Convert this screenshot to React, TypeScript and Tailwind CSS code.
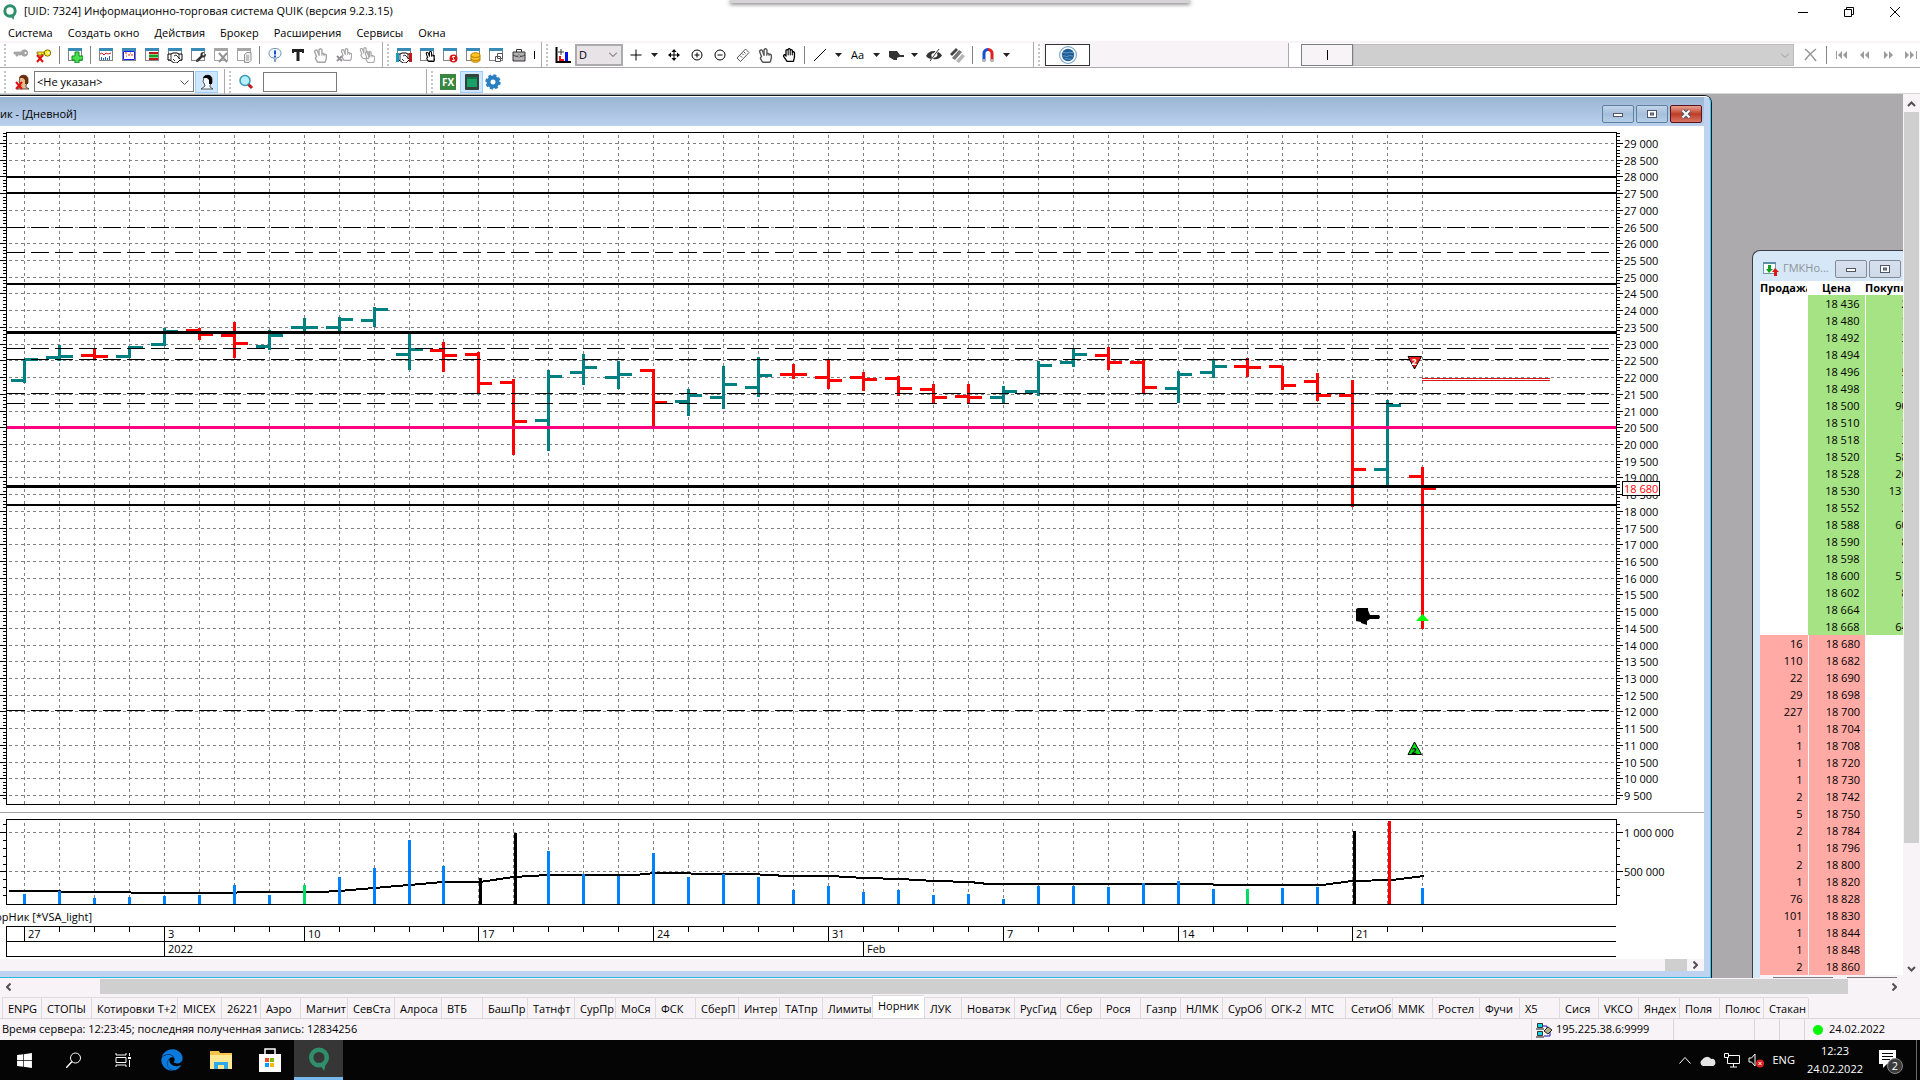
import React from 'react';
import { FaEdge, FaWindows, FaRegHandPaper, FaRegHandPeace, FaWrench } from 'react-icons/fa';

const TEAL = '#008080';
const RED = '#ff0000';

// [color, high, low, open, close], in chart pixels
const BARS: [string, number, number, number, number][] = [
  [TEAL, 359, 383, 380, 359],
  [TEAL, 345, 361, 357, 356],
  [RED, 348, 359, 355, 356],
  [TEAL, 346, 358, 356, 347],
  [TEAL, 328, 346, 344, 331],
  [RED, 328, 340, 330, 334],
  [RED, 322, 358, 335, 343],
  [TEAL, 330, 350, 346, 335],
  [TEAL, 318, 332, 327, 327],
  [TEAL, 317, 332, 327, 319],
  [TEAL, 307, 327, 320, 309],
  [TEAL, 333, 370, 354, 349],
  [RED, 342, 372, 350, 355],
  [RED, 352, 393, 354, 383],
  [RED, 379, 455, 382, 421],
  [TEAL, 370, 451, 420, 376],
  [TEAL, 354, 385, 372, 367],
  [TEAL, 361, 389, 377, 374],
  [RED, 369, 427, 370, 402],
  [TEAL, 389, 416, 401, 395],
  [TEAL, 366, 409, 397, 384],
  [TEAL, 357, 397, 387, 375],
  [RED, 364, 379, 374, 374],
  [RED, 359, 389, 377, 380],
  [RED, 372, 391, 377, 379],
  [RED, 376, 396, 378, 388],
  [RED, 384, 404, 389, 397],
  [RED, 384, 404, 396, 397],
  [TEAL, 386, 403, 397, 391],
  [TEAL, 361, 396, 391, 365],
  [TEAL, 348, 367, 362, 354],
  [RED, 347, 370, 355, 362],
  [RED, 359, 394, 362, 387],
  [TEAL, 371, 403, 388, 374],
  [TEAL, 359, 378, 372, 366],
  [RED, 358, 377, 366, 367],
  [RED, 366, 390, 366, 385],
  [RED, 373, 401, 381, 395],
  [RED, 380, 507, 395, 469],
  [TEAL, 400, 485, 469, 405],
  [RED, 467, 629, 476, 488],
];

const VOLUMES = [
  894, 891, 898, 897, 896, 895, 885, 895, 885, 877, 868, 840, 866, 878, 833, 851, 874, 876, 853, 877, 874,
  877, 890, 886, 892, 890, 895, 894, 899, 886, 886, 887, 883, 881, 889, 889, 888, 887, 831, 821, 888,
];

const VOLUME_COLORS: Record<number, string> = {
  8: '#00dc64', 35: '#00dc64', 13: '#000000', 14: '#000000', 38: '#000000', 39: RED,
};

const DAYS: Record<number, string> = { 0: '27', 4: '3', 8: '10', 13: '17', 18: '24', 23: '31', 28: '7', 33: '14', 38: '21' };
const MONTHS: Record<number, string> = { 4: '2022', 24: 'Feb' };

// [y, thickness, color]
const LEVELS: [number, number, string][] = [
  [176, 2, '#000'], [192, 2, '#000'], [283, 2, '#000'], [331, 3, '#000'],
  [426, 3, '#ff0080'], [485, 3, '#000'], [504, 2, '#000'],
];
const DASHED_LEVELS = [227, 252, 348, 359, 393, 403, 710];

const barX = (i: number) => 24 + 35 * i - (i >= 12 ? 1 : 0) - (i >= 35 ? 1 : 0);
const priceY = (price: number) => Math.round(143 + (29000 - price) * 0.03344);
const formatPrice = (n: number) => String(n).replace(/\B(?=(\d{3})+$)/g, ' ');

const MAJOR_PRICES = Array.from({ length: 40 }, (_, i) => 29000 - i * 500);
const MINOR_PRICES = Array.from({ length: 200 }, (_, i) => 29300 - i * 100).filter(p => p >= 9300);

const BIDS: [number, number][] = [
  [18436, 20], [18480, 10], [18492, 30], [18494, 10], [18496, 50], [18498, 30], [18500, 900], [18510, 10],
  [18518, 30], [18520, 580], [18528, 260], [18530, 1310], [18552, 20], [18588, 600], [18590, 80], [18598, 20],
  [18600, 510], [18602, 80], [18664, 10], [18668, 640],
];
const ASKS: [number, number][] = [
  [16, 18680], [110, 18682], [22, 18690], [29, 18698], [227, 18700], [1, 18704], [1, 18708], [1, 18720],
  [1, 18730], [2, 18742], [5, 18750], [2, 18784], [1, 18796], [2, 18800], [1, 18820], [76, 18828],
  [101, 18830], [1, 18844], [1, 18848], [2, 18860],
];

const TABS: [string, string][] = [
  ['ENPG', 'w-[39px]'], ['СТОПЫ', 'w-[50px]'], ['Котировки Т+2', 'w-[86px]'], ['MICEX', 'w-[44px]'],
  ['26221', 'w-[39px]'], ['Аэро', 'w-[40px]'], ['Магнит', 'w-[47px]'], ['СевСта', 'w-[47px]'],
  ['Алроса', 'w-[47px]'], ['ВТБ', 'w-[41px]'], ['БашПр', 'w-[45px]'], ['Татнфт', 'w-[47px]'],
  ['СурПр', 'w-[41px]'], ['МоСя', 'w-[40px]'], ['ФСК', 'w-[40px]'], ['СберП', 'w-[43px]'],
  ['Интер', 'w-[41px]'], ['ТАТпр', 'w-[43px]'], ['Лимиты', 'w-[50px]'], ['Норник', 'w-[52px]'],
  ['ЛУК', 'w-[37px]'], ['Новатэк', 'w-[53px]'], ['РусГид', 'w-[46px]'], ['Сбер', 'w-[40px]'],
  ['Рося', 'w-[40px]'], ['Газпр', 'w-[40px]'], ['НЛМК', 'w-[42px]'], ['СурОб', 'w-[43px]'],
  ['ОГК-2', 'w-[40px]'], ['МТС', 'w-[40px]'], ['СетиОб', 'w-[47px]'], ['ММК', 'w-[40px]'],
  ['Ростел', 'w-[47px]'], ['Фучи', 'w-[40px]'], ['X5', 'w-[40px]'], ['Сися', 'w-[39px]'],
  ['VKCO', 'w-[40px]'], ['Яндех', 'w-[41px]'], ['Поля', 'w-[40px]'], ['Полюс', 'w-[44px]'], ['Стакан', 'w-[45px]'],
];

const Svg: React.FC<{ size?: number; children: React.ReactNode }> = ({ size = 16, children }) => (
  <svg width={size} height={size} viewBox="0 0 16 16" fill="none" className="block shrink-0">{children}</svg>
);

// small window frame shared by most of the toolbar icons
const Frame: React.FC<{ gray?: boolean; children?: React.ReactNode }> = ({ gray, children }) => (
  <Svg>
    <rect x="1.5" y="1.5" width="13" height="12" fill="#fff" stroke={gray ? '#a5a5a5' : '#848484'} />
    <rect x="1" y="1" width="14" height="3" fill={gray ? '#a5a5a5' : '#398ab5'} />
    {children}
  </Svg>
);

const Quik: React.FC<{ size?: number }> = ({ size = 16 }) => (
  <Svg size={size}>
    <circle cx="8" cy="7" r="5.2" stroke="#2f8f6b" strokeWidth="3" />
    <path d="M7.5 10.5 12.5 11 11.5 16z" fill="#2f8f6b" />
  </Svg>
);

const ToolButton: React.FC<{ title: string; children: React.ReactNode }> = ({ title, children }) => (
  <button title={title} className="w-[23px] h-[22px] shrink-0 flex items-center justify-center">{children}</button>
);

const Caret = () => (
  <button title="Ещё" className="w-[15px] h-[22px] shrink-0 flex items-center justify-center">
    <svg width="7" height="4" viewBox="0 0 7 4"><path d="M0 0h7L3.5 4z" fill="#222" /></svg>
  </button>
);

const Sep = () => (
  <div className="w-2 shrink-0 flex justify-center"><div className="w-px h-[18px] bg-[#848484]" /></div>
);

const Grip = () => (
  <div className="w-[9px] shrink-0 flex justify-center"><div className="h-[22px] border-l-2 border-dotted border-[#c6c3c6]" /></div>
);

const Edge = () => <div className="w-px h-[26px] shrink-0 bg-[#adaaad]" />;

const Key: React.FC<{ color: string; line: string; cross?: boolean }> = ({ color, line, cross }) => (
  <Svg>
    <path d="M1 5h7v3H6V7H5v2H3V7H1z" fill={color} stroke={line} strokeWidth=".8" />
    <circle cx="11.5" cy="6" r="3.2" fill={color} stroke={line} />
    <circle cx="12.5" cy="6" r="1" fill="#fff" />
    {cross && <path d="m1 8 6 7M7 8l-6 7" stroke="#e01010" strokeWidth="2" />}
  </Svg>
);

// clasped hands with white palms, drawn over a frame
const Handshake = () => (
  <g>
    <path d="M1 7h3l2-1h4l2 1h3v6h-2l-3 3H7l-4-3H1z" fill="#fff" stroke="#000" />
    <path d="M4 7v6M12 7v5M7 9l2-1 4 4M6 12l2 2" stroke="#000" strokeWidth=".8" />
  </g>
);

const Rewind: React.FC<{ title: string; d: string }> = ({ title, d }) => (
  <ToolButton title={title}><svg width="12" height="8" viewBox="0 0 12 8"><path d={d} fill="#9c9a9c" /></svg></ToolButton>
);

const Toolbar = () => (
  <div className="flex items-center h-[27px] border-t-2 border-[#f7f3f7] border-b border-b-[#adaaad]">
    <Grip />
    <ToolButton title="Подключиться"><Key color="#a5a5a5" line="#a5a5a5" /></ToolButton>
    <ToolButton title="Отключиться"><Key color="#ffef31" line="#7b6d00" cross /></ToolButton>
    <Sep />
    <ToolButton title="Новое окно">
      <Frame><path d="M8 5h4v4h4v4h-4v3H8v-3H5V9h3z" fill="#4be04b" stroke="#0b8a1a" /></Frame>
    </ToolButton>
    <Sep />
    <ToolButton title="График">
      <Frame><path d="m2 7 2-1 2 2 2-2 2 1 3-1" stroke="#d62020" /><path d="M3.500 13v-3M5.500 13v-2M7.500 13v-3M9.500 13v-2M11.500 13V9" stroke="#2060c0" /></Frame>
    </ToolButton>
    <ToolButton title="Диаграмма">
      <Frame><path d="M2.500 4.500h11v8h-11z" stroke="#1020ff" /><path d="M4 6h2M7 8h2M9 6h1M5 9h1M11 7v2" stroke="#f02020" /></Frame>
    </ToolButton>
    <ToolButton title="Котировки">
      <Frame><path d="M5 6h9M5 12h9" stroke="#c01818" strokeWidth="2" /><path d="M5 9h9" stroke="#10a020" strokeWidth="3" /></Frame>
    </ToolButton>
    <ToolButton title="Сделки"><Frame><Handshake /></Frame></ToolButton>
    <ToolButton title="Настройка"><Frame><g transform="translate(6 5)" color="#333"><FaWrench size={10} /></g></Frame></ToolButton>
    <ToolButton title="Удалить"><Frame gray><path d="m6 6 8 9M14 6l-8 9" stroke="#949294" strokeWidth="2" /></Frame></ToolButton>
    <ToolButton title="Копировать">
      <Frame gray><path d="M8.500 7.500 11 5.500h4v8l-2 2H8.500z" fill="#eee" stroke="#949294" /><path d="M10 9h3M10 11h3M10 13h3" stroke="#949294" /></Frame>
    </ToolButton>
    <Sep />
    <ToolButton title="Сообщения">
      <Svg><path d="M8 1.500c4 0 6 2 6 4.800 0 3-2.500 4.700-4.700 4.700L8 15l-1-4C4 11 2 9 2 6.300 2 3.500 4 1.500 8 1.500z" fill="#eef7ff" stroke="#6f8ea8" /><path d="M8 3.500v4M8 8.500v2" stroke="#1450c8" strokeWidth="2" /></Svg>
    </ToolButton>
    <ToolButton title="Текст"><Svg><path d="M2 2h12v4h-2V5H9.500v9h-3V5H4v1H2z" fill="#222" /></Svg></ToolButton>
    <ToolButton title="Заявка"><FaRegHandPeace size={15} color="#a5a5a5" /></ToolButton>
    <ToolButton title="Снять заявку">
      <Svg><g transform="translate(4 1)" color="#a5a5a5"><FaRegHandPeace size={13} /></g><path d="m1 9 5 5M6 9l-5 5" stroke="#949294" strokeWidth="2" /></Svg>
    </ToolButton>
    <ToolButton title="Снять все">
      <Svg><g color="#a5a5a5"><FaRegHandPeace size={12} /></g><g transform="translate(5 4)" color="#a5a5a5"><FaRegHandPeace size={12} /></g></Svg>
    </ToolButton>
    <div className="w-[5px] shrink-0 flex justify-end"><Edge /></div>
    <Grip />
    <ToolButton title="Таблица сделок">
      <Frame><Handshake /><path d="M0 6h3v9H0z" fill="#1a9ac0" /><path d="M13 6h3v9h-3z" fill="#c01818" /></Frame>
    </ToolButton>
    <ToolButton title="Таблица заявок"><Frame><g transform="translate(6 4)" color="#000"><FaRegHandPeace size={11} /></g></Frame></ToolButton>
    <ToolButton title="Стоп-заявки">
      <Frame><circle cx="11.500" cy="11.500" r="4" fill="#d81818" /><path d="M13 9.500h-2.500l2 4H10" stroke="#fff" /></Frame>
    </ToolButton>
    <ToolButton title="Деньги">
      <Frame><path d="M6 8c0-3 9-3 9 0v5c0 3-9 3-9 0z" fill="#ffc520" stroke="#b57b00" /><path d="M6 9c2 2 7 2 9 0M6 12c2 2 7 2 9 0" stroke="#b57b00" /></Frame>
    </ToolButton>
    <ToolButton title="Бумаги">
      <Frame><path d="M9.500 6.500h5v5h-5zM7.500 9.500h5v5h-5z" fill="#fff" stroke="#555" /></Frame>
    </ToolButton>
    <ToolButton title="Портфель">
      <Svg><path d="M2 5h12v9H2z" fill="#b5b2b5" stroke="#333" /><path d="M5.500 5V2.500h5V5M2 8c3 2 9 2 12 0" stroke="#333" /><path d="M7 8h2v2H7z" fill="#fff" stroke="#333" strokeWidth=".5" /></Svg>
    </ToolButton>
    <div className="w-3 h-[22px] shrink-0 flex justify-between items-center pl-1"><div className="w-px h-2 bg-black" /><Edge /></div>
    <Grip />
    <ToolButton title="Тип графика">
      <Svg><path d="M1.500 0v15H16" stroke="#000" strokeWidth="2" /><path d="M4 9h2v5H4zM6 12h3v2H6z" fill="#f01010" /><path d="M10 5h3v9h-3z" fill="#0010f0" /><path d="M3 5h6M6 2v6" stroke="#333" /></Svg>
    </ToolButton>
    <div className="relative w-12 h-[22px] ml-px shrink-0 border-2 border-[#adaaad] bg-[#e7e3e7]">
      <select aria-label="Интервал" className="appearance-none w-full h-full pl-0.5 leading-4 outline-none"><option>D</option></select>
      <svg width="8" height="5" viewBox="0 0 8 5" fill="none" className="absolute right-1 top-1.5"><path d="m0 .5 4 4 4-4" stroke="#555" /></svg>
    </div>
    <div className="w-px shrink-0" />
    <ToolButton title="Курсор"><Svg><path d="M8 2.500v11M2.500 8h11" stroke="#000" /></Svg></ToolButton>
    <Caret />
    <ToolButton title="Переместить">
      <Svg><path d="M8 3v10M3 8h10" stroke="#000" /><path d="m8 2-2.500 3h5zM8 14l-2.500-3h5zM2 8l3-2.500v5zM14 8l-3-2.500v5z" fill="#000" /></Svg>
    </ToolButton>
    <ToolButton title="Увеличить"><Svg><circle cx="8" cy="8" r="5" stroke="#000" /><path d="M8 5.500v5M5.500 8h5" stroke="#000" /></Svg></ToolButton>
    <ToolButton title="Уменьшить"><Svg><circle cx="8" cy="8" r="5" stroke="#000" /><path d="M5.500 8h5" stroke="#000" /></Svg></ToolButton>
    <ToolButton title="Линейка">
      <Svg><path d="m2 11 8.500-9L14 5.500 5.500 14.500z" fill="#fff" stroke="#555" /><path d="m5 8.500 2 2M7 6.500l1.500 1.500M8.500 4.500l2 2" stroke="#555" /></Svg>
    </ToolButton>
    <ToolButton title="Выбор"><FaRegHandPeace size={15} color="#555" /></ToolButton>
    <ToolButton title="Рука"><FaRegHandPaper size={14} color="#000" /></ToolButton>
    <Sep />
    <ToolButton title="Линия"><Svg><path d="M2 14 14 2" stroke="#000" /></Svg></ToolButton>
    <Caret />
    <ToolButton title="Надпись"><span>Aa</span></ToolButton>
    <Caret />
    <ToolButton title="Метка"><Svg><path d="M1 4h8l3 4h4v2h-5l-2 1v2H6l-5-3z" fill="#333" /></Svg></ToolButton>
    <Caret />
    <ToolButton title="Скрыть">
      <Svg>
        <path d="M0 9c2-4 5-5.500 9.500-5L8 6C5 6 5 9 6 10l-1 2C3 11.500 1 10.500 0 9zM12 5c2 1 3 2 4 3.500-2 3-5 4.500-9 3.500l1-1.500c3 0 4-2 3-4z" fill="#333" />
        <path d="M13 2 4 14" stroke="#333" />
      </Svg>
    </ToolButton>
    <ToolButton title="Слои">
      <Svg><path d="m1 7 6-6 2 2-6 6z" fill="#444" /><path d="m3 11 7-8 3 2-7 8z" fill="#777" /><path d="m7 14 6-7 3 2-6 7z" fill="#b5b5b5" /></Svg>
    </ToolButton>
    <Sep />
    <ToolButton title="Магнит">
      <Svg><path d="M4 14V7a4 4 0 0 1 4-4.500" stroke="#1a4fd0" strokeWidth="3" /><path d="M12 14V7a4 4 0 0 0-4-4.500" stroke="#e02020" strokeWidth="3" /><path d="M2.500 12h3v3h-3zM10.500 12h3v3h-3z" fill="#b5b5b5" /></Svg>
    </ToolButton>
    <Caret />
    <div className="w-5 shrink-0 flex justify-end"><Edge /></div>
    <Grip />
    <div className="flex items-center w-[246px] h-full shrink-0 pl-0.5 bg-[#f7f3f7] border-r border-[#adaaad]">
      <button title="Сеть" className="w-[45px] h-[22px] flex items-center justify-center bg-white border border-[#333]">
        <Svg size={18}><circle cx="8" cy="8" r="7.500" stroke="#7aa5c8" /><circle cx="8" cy="8" r="5.500" fill="#1d5f96" /><path d="M3 6c2-1 3 1 5 0s3 0 5 0M3 9c2-1 3 1 5 0s3 0 5 0M5 11.500c2-1 4 1 6 0" stroke="#9cc5e5" strokeWidth=".5" /></Svg>
      </button>
    </div>
    <div className="w-3 shrink-0" />
    <button title="Инструмент" className="w-[52px] h-[22px] shrink-0 border border-[#7b7d84] bg-[#f7f3f7] flex items-center justify-center"><span className="w-px h-2.5 bg-black" /></button>
    <div className="relative flex-1 h-[22px] bg-[#cecfce] border border-[#bdbebd]">
      <select aria-label="Поиск" disabled className="appearance-none w-full h-full"><option></option></select>
      <svg width="8" height="5" viewBox="0 0 8 5" fill="none" className="absolute right-1 top-2"><path d="m0 .5 4 4 4-4" stroke="#9c9a9c" /></svg>
    </div>
    <div className="flex items-center shrink-0 overflow-hidden w-[126px]">
      <div className="w-px h-[18px] ml-px bg-[#848484]" />
      <div className="w-1 shrink-0" />
      <ToolButton title="Очистить"><Svg><path d="M2 2c4 3 8 8 11 12M13 2C9 5 5 9 2 13" stroke="#949294" strokeWidth="1.500" /></Svg></ToolButton>
      <Sep />
      <Rewind title="В начало" d="M0 0h1v8H0zM6 0v8L2 4zM11 0v8L7 4z" />
      <Rewind title="Назад" d="M5 0v8L1 4zM10 0v8L6 4z" />
      <Rewind title="Вперёд" d="M2 0v8l4-4zM7 0v8l4-4z" />
      <Rewind title="В конец" d="M0 0v8l4-4zM5 0v8l4-4zM11 0h1v8h-1z" />
    </div>
  </div>
);

const Person: React.FC<{ cross?: boolean }> = ({ cross }) => (
  <Svg>
    <path d="M5 3c2-3 8-2 8 2v4l-2 2v2l3 2H2l4-3-1-3-1-1z" fill={cross ? '#e8b98a' : '#f5fbff'} stroke="#333" strokeWidth=".8" />
    <path d="M4 4c1-4 9-4 9 1v5h-3V6L8 4z" fill={cross ? '#6b3010' : '#000'} />
    {cross && <path d="m1 8 6 7M7 8l-6 7" stroke="#e01010" strokeWidth="2" />}
  </Svg>
);

const SubToolbar = () => (
  <div className="flex items-center h-[26px] pt-0.5 border-b border-[#d6d7d6]">
    <Grip />
    <div className="w-[25px] pl-1.5 shrink-0"><Person cross /></div>
    <div className="relative w-40 h-[21px] border border-[#7b797b]">
      <select aria-label="Клиент" className="appearance-none w-full h-full pl-0.5 leading-4 outline-none"><option>&lt;Не указан&gt;</option></select>
      <svg width="9" height="5" viewBox="0 0 9 5" fill="none" className="absolute right-1 top-2"><path d="m.5.500 4 4 4-4" stroke="#555" /></svg>
    </div>
    <button title="Клиент" className="ml-px w-[23px] h-[22px] bg-[#cee7ff] border border-[#9ccfff] flex items-center justify-center"><Person /></button>
    <div className="w-[7px] flex justify-end"><Edge /></div>
    <Grip />
    <div className="w-[29px] pl-1">
      <Svg><path d="m9 9 5 5" stroke="#c01818" strokeWidth="3" /><circle cx="7" cy="6.500" r="5" fill="#b5f0ff" stroke="#3b97b5" strokeWidth="1.500" /></Svg>
    </div>
    <input aria-label="Найти" className="w-[74px] h-5 border border-[#7b797b] outline-none" />
    <div className="w-[90px] flex justify-end"><Edge /></div>
    <Grip />
    <div className="w-1" />
    <button title="FX" className="w-4 h-4 bg-[#39863f] text-white font-bold text-[10px] leading-4">FX</button>
    <button title="Терминал" className="ml-1 w-[23px] h-[22px] bg-[#cee7ff] border border-[#9ccfff] flex items-center justify-center">
      <Svg><rect x="1" width="14" height="16" rx="1" fill="#34423c" /><rect x="3" y="3" width="10" height="10" fill="#17a067" /><path d="M3 3h10v2H3z" fill="#0c7548" /></Svg>
    </button>
    <button title="Настройки" className="ml-0.5">
      <Svg><circle cx="8" cy="8" r="4.500" stroke="#2a7fc0" strokeWidth="4" /><circle cx="8" cy="8" r="6.700" stroke="#2a7fc0" strokeWidth="2" strokeDasharray="3 2.300" /></Svg>
    </button>
  </div>
);

const WindowButtons: React.FC<{ active?: boolean }> = ({ active }) => {
  const base = active
    ? 'border-[#5f7f9f] bg-linear-to-b from-[#c2d5ea] via-[#a5bedb] to-[#b5cfe8]'
    : 'border-[#848a94] bg-linear-to-b from-[#d6e0ee] to-[#ced9e8]';
  return (
    <div className="flex gap-0.5 shrink-0">
      <button title="Свернуть" className={`w-8 h-[18px] rounded-xs border flex items-center justify-center ${base}`}>
        <Svg><rect x="3.500" y="7.500" width="9" height="3" fill="#fff" stroke="#525563" /></Svg>
      </button>
      <button title="Развернуть" className={`w-8 h-[18px] rounded-xs border flex items-center justify-center ${base}`}>
        <Svg><rect x="3.500" y="4.500" width="9" height="7" fill="#fff" stroke="#525563" /><rect x="6.500" y="7" width="3" height="2" fill="#7a9cc5" stroke="#525563" /></Svg>
      </button>
      {active && (
        <button title="Закрыть" className="w-8 h-[18px] rounded-xs border border-[#5a1018] bg-linear-to-b from-[#e8a093] via-[#bd3c24] to-[#d67563] flex items-center justify-center">
          <Svg><path d="m4.500 4.500 7 7M11.500 4.500l-7 7" stroke="#525563" strokeWidth="4" /><path d="m4.500 4.500 7 7M11.500 4.500l-7 7" stroke="#fff" strokeWidth="2" /></Svg>
        </button>
      )}
    </div>
  );
};

const Chart = () => (
  <svg viewBox="0 126 1704 833" className="block w-full bg-white" fontSize="11">
    <g shapeRendering="crispEdges">
      {/* price grid */}
      <g stroke="#808080" strokeDasharray="3 3">
        {MAJOR_PRICES.map(p => <line key={p} x1="9" x2="1614" y1={priceY(p) + 0.5} y2={priceY(p) + 0.5} />)}
        {BARS.map((_, i) => <line key={i} x1={barX(i) + 0.5} x2={barX(i) + 0.5} y1="135" y2="804" />)}
        {BARS.map((_, i) => <line key={i} x1={barX(i) + 0.5} x2={barX(i) + 0.5} y1="823" y2="904" />)}
        <path d="M9 832.500H1614M9 871.500H1614" />
      </g>

      {BARS.map(([color, high, low, open, close], i) => (
        <g key={i} fill={color}>
          <rect x={barX(i) - 1} y={high} width="3" height={low - high} />
          <rect x={barX(i) - 13} y={open - 1} width="13" height="3" />
          <rect x={barX(i)} y={close - 1} width="14" height="3" />
        </g>
      ))}

      {LEVELS.map(([y, h, color]) => <rect key={y} x="7" y={y} width="1609" height={h} fill={color} />)}
      {DASHED_LEVELS.map(y => <line key={y} x1="7" x2="1610" y1={y + 0.5} y2={y + 0.5} stroke="#000" strokeDasharray="18 6" />)}
      <path d="M1422 378.500h128M1422 380.500h128" stroke="#d61818" />

      {/* frames and axis ticks */}
      <path d="M6.500 132.500H1616.500V804.500H6.500zM6.500 819.500H1616.500V904.500H6.500z" stroke="#000" fill="none" />
      {MINOR_PRICES.map(p => <path key={p} d={`M3 ${priceY(p) + 0.5}h3M1617 ${priceY(p) + 0.5}h3`} stroke="#000" />)}
      {MAJOR_PRICES.map(p => <path key={p} d={`M0 ${priceY(p) + 0.5}h6M1617 ${priceY(p) + 0.5}h6`} stroke="#000" />)}
      {[824, 840, 848, 856, 864, 879, 887, 895].map(y => <path key={y} d={`M3 ${y + 0.5}h3M1617 ${y + 0.5}h3`} stroke="#000" />)}
      <path d="M0 832.500h6M1617 832.500h6M0 871.500h6M1617 871.500h6" stroke="#000" />
      <path d="M0 812.500H1704" stroke="#a5a2a5" />

      <polyline
        points="9,891 60,891 62,892 130,892 132,893 236,893 238,892 320,892 339,891 374,888 409,885 443,882 480,882 513,877 548,875 635,875 655,873 690,873 692,874 758,874 762,875 795,876 830,876 865,878 900,879 935,881 970,882 988,884 1211,884 1215,885 1322,885 1352,881 1392,880 1424,876"
        fill="none" stroke="#000" strokeWidth="2"
      />
      {VOLUMES.map((y, i) => {
        const wide = i === 13 || i === 14 || i === 38 || i === 39;
        return <rect key={i} x={barX(i) + (wide ? 1 : -1)} y={y} width="3" height={904 - y} fill={VOLUME_COLORS[i] || '#0082ff'} />;
      })}

      {/* date axis */}
      <path d="M1616 926.500H6.500V956.500H1616M6 941.500H1616" stroke="#000" fill="none" />
      {BARS.map((_, i) => <path key={i} d={`M${barX(i) + 0.5} 927v${DAYS[i] ? 15 : 5}`} stroke="#000" />)}
      {Object.keys(MONTHS).map(i => <path key={i} d={`M${barX(+i) + 0.5} 942v15`} stroke="#000" />)}
    </g>

    {MAJOR_PRICES.map(p => <text key={p} x="1624" y={priceY(p) + 5}>{formatPrice(p)}</text>)}
    <text x="1624" y="837">1 000 000</text>
    <text x="1624" y="876">500 000</text>
    <rect x="1622.500" y="481.500" width="37" height="14" fill="#fff" stroke="#000" />
    <text x="1624" y="493" fill="#f00">18 680</text>
    {Object.entries(DAYS).map(([i, label]) => <text key={i} x={barX(+i) + 4} y="938">{label}</text>)}
    {Object.entries(MONTHS).map(([i, label]) => <text key={i} x={barX(+i) + 4} y="953">{label}</text>)}
    <text x="92" y="921" textAnchor="end">орНик [*VSA_light]</text>

    {/* trade marks */}
    <path d="M1408 356.500h13.500L1414.500 369z" fill="#f01818" stroke="#000" />
    <text x="1414" y="365" textAnchor="middle" fill="#fff" fontSize="9" fontWeight="700">2</text>
    <path d="M1408 754.500h13.500L1414.500 742z" fill="#00e010" stroke="#000" />
    <text x="1414" y="754" textAnchor="middle" fontSize="9" fontWeight="700">2</text>
    <path d="M1416 621h13l-6.500-7z" fill="#00ff00" />
    <path d="M1356 609l2-1h10v2l2 5h9l1 2-1 2h-9l-3 2v4l-6-2v-1l-5-1z" fill="#000" />
  </svg>
);

const ChartWindow = () => (
  <section className="flex-1 min-w-0 mt-px border-t border-r border-[#101820] rounded-tr-lg">
    <div className="border-t border-t-white border-r border-r-[#31cbef] border-b border-b-[#31b8de] rounded-tr-md bg-[#bdd3ef] pr-1.5 pb-1.5">
      <header className="flex items-center h-[29px] pt-[5px] bg-linear-to-b from-[#9ab5d3] to-[#bad1ee] overflow-hidden">
        <h2 className="flex-1 min-w-0">ик - [Дневной]</h2>
        <WindowButtons active />
        <div className="w-0.5" />
      </header>
      <Chart />
      <div className="flex items-center justify-end h-3 bg-[#f7f3f7]">
        <div className="w-[22px] h-full bg-[#cecfce]" />
        <div className="w-[17px] flex justify-center">
          <svg width="5" height="8" viewBox="0 0 5 8" fill="none"><path d="m.5.500 3.500 3.500-3.500 3.500" stroke="#525152" strokeWidth="2" /></svg>
        </div>
      </div>
    </div>
  </section>
);

const OrderBook = () => (
  <section className="w-[151px] shrink-0 mt-[156px] border-t border-l border-[#3a3f45] rounded-tl-lg bg-[#d6e7f7] pl-[7px] flex flex-col overflow-hidden">
    <header className="flex items-center gap-1 h-[30px] pt-[5px] pl-[3px] shrink-0">
      <Svg><rect x=".5" y="1.500" width="12" height="11" fill="#fff" stroke="#6f97a8" /><path d="M0 1h13v2H0z" fill="#5f8fa8" /><path d="M5 4h3v4h2l-4 4-3-4h2z" fill="#10a020" /><path d="M11 15v-4H9l3-4 4 4h-2v4z" fill="#d81818" /></Svg>
      <h2 className="w-12 text-[#8c9299] whitespace-nowrap">ГМКНо...</h2>
      <WindowButtons />
    </header>
    <table className="table-fixed w-[162px] border-collapse bg-white leading-none">
      <thead>
        <tr className="h-[14px]">
          <th className="w-12 p-0 text-left"><div className="w-[47px] overflow-hidden leading-[14px]">Продажа</div></th>
          <th className="w-[57px] p-0 leading-[14px]">Цена</th>
          <th className="w-[57px] p-0 text-left leading-[14px]">Покупка</th>
        </tr>
      </thead>
      <tbody>
        {BIDS.map(([price, qty]) => (
          <tr key={price} className="h-[17px] text-right">
            <td className="p-0"></td>
            <td className="p-0 pr-[5px] bg-[#a5e384]">{formatPrice(price)}</td>
            <td className="p-0 pr-2 bg-[#a5e384] border-l border-white">{qty}</td>
          </tr>
        ))}
        {ASKS.map(([qty, price]) => (
          <tr key={price} className="h-[17px] text-right">
            <td className="p-0 pr-[5px] bg-[#ffaaa5]">{qty}</td>
            <td className="p-0 pr-[5px] bg-[#ffaaa5] border-l border-white">{formatPrice(price)}</td>
            <td className="p-0"></td>
          </tr>
        ))}
      </tbody>
    </table>
    <div className="flex-1 flex items-end gap-3.5 pl-[13px] bg-[#f7f3f7]">
      <div className="w-[60px] h-px bg-[#7b797b]" />
      <div className="w-[50px] h-px bg-[#7b797b]" />
    </div>
  </section>
);

const TaskItem: React.FC<{ title: string; active?: boolean; children: React.ReactNode }> = ({ title, active, children }) => (
  <button
    title={title}
    className={`w-[49px] h-10 flex items-center justify-center ${active ? 'bg-[#363636] border-b-[3px] border-[#76b9ed]' : ''}`}
  >
    {children}
  </button>
);

const Taskbar = () => (
  <footer className="flex items-center h-10 bg-[#050505] text-white">
    <TaskItem title="Пуск"><FaWindows size={17} /></TaskItem>
    <TaskItem title="Поиск"><Svg><circle cx="9.500" cy="6" r="5" stroke="#fff" /><path d="M6 9.500 0 16" stroke="#fff" strokeWidth="1.500" /></Svg></TaskItem>
    <TaskItem title="Представление задач">
      <Svg><path d="M1 1v2h10V1M1 15v-2h10v2M1 5.500h10v5H1zM14.500 1v3M14.500 8v7" stroke="#fff" /><path d="M13 5h3v2h-3z" fill="#fff" /></Svg>
    </TaskItem>
    <TaskItem title="Edge"><FaEdge size={22} color="#0a7bdc" /></TaskItem>
    <TaskItem title="Проводник">
      <svg width="22" height="20" viewBox="0 0 22 20"><path d="M0 1h9l1 2h12v16H0z" fill="#f5c54a" /><path d="M0 5h22v14H0z" fill="#ffe793" /><path d="M4 19v-7h14v7h-4v-4H8v4z" fill="#2fa8e8" /></svg>
    </TaskItem>
    <TaskItem title="Магазин">
      <svg width="24" height="24" viewBox="0 0 24 24" fill="none"><path d="M7 7V1h10v6" stroke="#fff" strokeWidth="1.500" /><path d="M1 6h22v18H1z" fill="#fff" /><path d="M7 10h4v4H7z" fill="#f25022" /><path d="M12 10h4v4h-4z" fill="#7fba00" /><path d="M7 15h4v4H7z" fill="#00a4ef" /><path d="M12 15h4v4h-4z" fill="#ffb900" /></svg>
    </TaskItem>
    <TaskItem title="QUIK" active><Quik size={24} /></TaskItem>
    <div className="flex-1" />
    <div className="flex items-center gap-2 pr-[9px]">
      <svg width="12" height="7" viewBox="0 0 12 7" fill="none"><path d="m.5 6.500 5.500-6 5.500 6" stroke="#fff" /></svg>
      <svg width="17" height="11" viewBox="0 0 17 11"><path d="M4 11a3.500 3.500 0 0 1-.5-6.500A5 5 0 0 1 12 4a3.500 3.500 0 0 1 1.500 7z" fill="#e5e5e5" /></svg>
      <Svg><path d="M3.500 3.500h12v8h-12zM9.500 12v3M6 15h7" stroke="#fff" /><path d="M.5 1.500h4v4h-4z" fill="#050505" stroke="#fff" /></Svg>
      <Svg><path d="M1 6h2.500L7 2v12l-3.500-4H1z" stroke="#fff" /><circle cx="12" cy="11.500" r="4" fill="#e02020" /><path d="m10.500 10 3 3M13.500 10l-3 3" stroke="#fff" /></Svg>
      <span>ENG</span>
      <div className="pl-1 text-center leading-[18px]"><div>12:23</div><div>24.02.2022</div></div>
      <div className="relative ml-1 w-8 h-7">
        <svg width="17" height="18" viewBox="0 0 17 18" fill="none" className="mt-1 ml-1"><path d="M0 0h17v14H8l-4 4v-4H0z" fill="#fff" /><path d="M3 3.500h11M3 6.500h11M3 9.500h8" stroke="#050505" /></svg>
        <span className="absolute left-3 top-3 w-4 h-4 rounded-full bg-[#3a3a3a] border border-[#8a8a8a] text-center leading-[14px]">2</span>
      </div>
    </div>
    <div className="w-1 h-full border-l border-[#6b6b6b]" />
  </footer>
);

export default function App() {
  return (
    <div className="relative min-h-screen flex flex-col bg-white text-black text-[11px] font-['Open_Sans','Noto_Sans',sans-serif] overflow-hidden">
      <div className="absolute top-0 left-1/2 -translate-x-1/2 w-[460px] h-[3px] bg-[#d6d3d6] shadow-[0_1px_4px_rgba(0,0,0,0.7)]" />

      <header className="flex items-center gap-1.5 h-[23px] pl-0.5 pr-[5px]">
        <Quik />
        <h1 className="flex-1">[UID: 7324] Информационно-торговая система QUIK (версия 9.2.3.15)</h1>
        <button title="Свернуть" className="w-10 flex justify-center"><Svg><path d="M3 8.500h10" stroke="#000" /></Svg></button>
        <button title="Восстановить" className="w-10 flex justify-center"><Svg><path d="M3.500 5.500h7v7h-7zM5.500 5V3.500h7v7H11" stroke="#000" /></Svg></button>
        <button title="Закрыть" className="w-10 flex justify-center"><Svg><path d="m3 3 10 10M13 3 3 13" stroke="#000" /></Svg></button>
      </header>

      <nav className="flex items-center gap-[15px] h-[18px] pt-0.5 pl-2 leading-4">
        {['Система', 'Создать окно', 'Действия', 'Брокер', 'Расширения', 'Сервисы', 'Окна'].map(item => (
          <button key={item}>{item}</button>
        ))}
      </nav>

      <Toolbar />
      <SubToolbar />

      <main className="flex-1 flex bg-[#adaaad]">
        <ChartWindow />
        <div className="w-10 shrink-0" />
        <OrderBook />
        <div className="w-[17px] shrink-0 flex flex-col items-center bg-[#f7f3f7]">
          <svg width="9" height="18" viewBox="0 0 9 18" fill="none"><path d="m1 12 3.500-3.500L8 12" stroke="#525152" strokeWidth="2" /></svg>
          <div className="w-[15px] flex-[731] bg-[#cecfce]" />
          <div className="flex-[117]" />
          <svg width="9" height="18" viewBox="0 0 9 18" fill="none"><path d="m1 7 3.500 3.500L8 7" stroke="#525152" strokeWidth="2" /></svg>
        </div>
      </main>

      <div className="flex items-center h-[17px] bg-[#f7f3f7]">
        <div className="w-[100px] shrink-0 pl-1.5">
          <svg width="5" height="8" viewBox="0 0 5 8" fill="none"><path d="M4.500.500 1 4l3.500 3.500" stroke="#525152" strokeWidth="2" /></svg>
        </div>
        <div className="flex-1 h-[15px] bg-[#cecfce]" />
        <div className="w-[72px] flex justify-end pr-[23px]">
          <svg width="5" height="8" viewBox="0 0 5 8" fill="none"><path d="m.5.500 3.500 3.500-3.500 3.500" stroke="#525152" strokeWidth="2" /></svg>
        </div>
      </div>

      <div className="flex items-end h-6 pl-0.5 bg-[#f7f3f7] border-b border-[#d6d7d6]">
        {TABS.map(([label, width]) => (
          <button
            key={label}
            className={`${width} shrink-0 pl-[5px] text-left whitespace-nowrap border-t border-l border-[#dedbde] ${
              label === 'Норник' ? 'h-[23px] pb-0.5 bg-white' : 'h-[21px] pt-0.5'
            }`}
          >
            {label}
          </button>
        ))}
        <div className="h-5 border-l border-[#dedbde]" />
      </div>

      <div className="flex items-center h-[21px] bg-[#f7f3f7]">
        <div className="flex-1 pl-0.5">Время сервера: 12:23:45; последняя полученная запись: 12834256</div>
        <div className="flex items-center gap-1 w-[142px] h-full pl-1 border-l border-[#d6d7d6]">
          <Svg>
            <path d="M1.500 1.500h5v4h-5zM1.500 9.500h5v4h-5z" fill="#10d8e0" stroke="#333" />
            <path d="M0 7h8M0 15h8" stroke="#848284" strokeWidth="2" />
            <path d="M8 14h6v-4M7 4h4v3" stroke="#1010c0" />
            <path d="m8 9 4-4 4 3-4 4z" fill="#b5b284" stroke="#222" />
          </Svg>
          <span>195.225.38.6:9999</span>
        </div>
        <div className="w-[81px] h-full border-l border-[#d6d7d6]" />
        <div className="w-[25px] h-full border-l border-[#d6d7d6]" />
        <div className="w-[25px] h-full border-l border-[#d6d7d6]" />
        <div className="flex items-center gap-1.5 w-[116px] h-full pl-2 border-l border-[#d6d7d6]">
          <span className="w-2.5 h-2.5 rounded-full bg-[#00f700]" />
          <span>24.02.2022</span>
        </div>
      </div>

      <Taskbar />
    </div>
  );
}
